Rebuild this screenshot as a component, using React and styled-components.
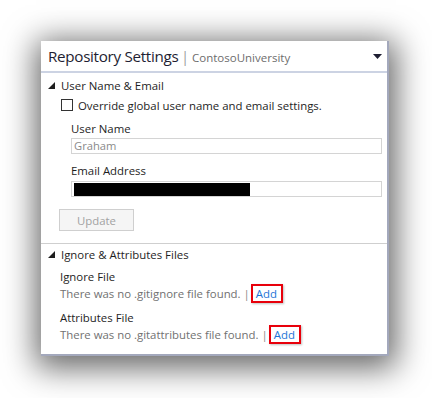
import styled, { createGlobalStyle } from 'styled-components'

const GlobalStyle = createGlobalStyle`
  html, body {
    margin: 0;
    padding: 0;
    background: #ffffff;
  }
  body {
    font-family: "Open Sans", "Noto Sans", sans-serif;
  }
`;

const Page = styled.div`
  width: 432px;
  height: 398px;
  padding: 41px 0 0 41px;
  box-sizing: border-box;
  overflow: hidden;
`;

const Panel = styled.div`
  width: 348px;
  height: 315px;
  box-sizing: border-box;
  background: #ffffff;
  border-right: 2px solid #a3a8bc;
  border-bottom: 2px solid #a3a8bc;
  box-shadow: 1px 6px 30px 6px rgba(0, 0, 0, 0.6);
  display: flex;
  flex-direction: column;
`;

const Header = styled.div`
  height: 30px;
  display: flex;
  align-items: center;
  padding: 0 5px 0 7px;
  border-bottom: 2px solid #ccd3e3;
`;

const Title = styled.span`
  font-size: 15.2px;
  color: #1e1e32;
  letter-spacing: -0.3px;
`;

const Bar = styled.span`
  color: #9a9a9a;
  font-size: 14px;
  margin: 0 3px 0 3px;
`;

const Subtitle = styled.span`
  font-size: 11.5px;
  color: #6d6d6d;
  margin-top: 2px;
  flex: 1;
`;

const Section = styled.div`
  padding: ${p => p.$pad || '4px 0 0 7px'};
  border-bottom: ${p => (p.$divided ? '1px solid #cfcfcf' : 'none')};
`;

const SectionHead = styled.div`
  display: flex;
  align-items: center;
  gap: 6px;
  font-size: 11.4px;
  color: #1e1e1e;
  height: 16px;
`;

const Body = styled.div`
  padding-left: ${p => p.$indent || 12}px;
`;

const CheckRow = styled.label`
  display: flex;
  align-items: center;
  gap: 5px;
  font-size: 11.4px;
  color: #1e1e1e;
  margin-top: 4px;
  margin-left: 2px;
  height: 16px;
`;

const Box = styled.span`
  width: 10px;
  height: 10px;
  border: 1px solid #333;
  background: #fff;
`;

const Field = styled.div`
  padding-left: 12px;
  margin-top: ${p => p.$top || 9}px;
`;

const Label = styled.div`
  font-size: 11.4px;
  color: #1e1e1e;
  line-height: 15px;
`;

const Input = styled.div`
  margin-top: ${p => p.$top || 5}px;
  width: 311px;
  height: 16px;
  box-sizing: border-box;
  border: 1px solid #d4d4d4;
  font-size: 11.2px;
  color: #8a8a8a;
  padding: 0 2px;
  line-height: 14px;
  display: flex;
  align-items: center;
`;

const Redact = styled.span`
  width: 176px;
  height: 13px;
  background: #000;
`;

const Button = styled.div`
  margin: 12px 0 12px 0;
  width: 75px;
  height: 22px;
  box-sizing: border-box;
  border: 1px solid #cfcfcf;
  background: #f5f5f5;
  color: #a2a2a2;
  font-size: 11.4px;
  display: flex;
  align-items: center;
  justify-content: center;
`;

const Group = styled.div`
  margin-top: ${p => p.$top || 6}px;
`;

const Note = styled.div`
  font-size: 11.4px;
  color: #717171;
  display: flex;
  align-items: center;
  line-height: 17px;
`;

const Sep = styled.span`
  margin: 0 1px 0 3px;
  color: #888;
`;

const AddLink = styled.span`
  color: #1e74d6;
  border: 2px solid #e8000b;
  padding: 0 4px 0 3px;
  line-height: 15px;
  box-shadow: 1px 1px 2px rgba(0, 0, 0, 0.25);
`;

const Expander = () => (
  <svg width="7" height="7" viewBox="0 0 7 7">
    <polygon points="7,0 7,7 0,7" fill="#1e1e1e" />
  </svg>
);

const Caret = () => (
  <svg width="9" height="5" viewBox="0 0 9 5">
    <polygon points="0,0 9,0 4.5,5" fill="#1e1e32" />
  </svg>
);

export default function App() {
  return (
    <Page>
      <GlobalStyle />
      <Panel>
        <Header>
          <Title>Repository Settings</Title>
          <Bar>|</Bar>
          <Subtitle>ContosoUniversity</Subtitle>
          <Caret />
        </Header>

        <Section $divided>
          <SectionHead>
            <Expander />
            User Name &amp; Email
          </SectionHead>
          <Body $indent={11}>
            <CheckRow>
              <Box />
              Override global user name and email settings.
            </CheckRow>
            <Field $top={8}>
              <Label>User Name</Label>
              <Input $top={2}>Graham</Input>
            </Field>
            <Field $top={9}>
              <Label>Email Address</Label>
              <Input $top={3}>
                <Redact />
              </Input>
            </Field>
            <Button>Update</Button>
          </Body>
        </Section>

        <Section $pad="2px 0 0 7px">
          <SectionHead>
            <Expander />
            Ignore &amp; Attributes Files
          </SectionHead>
          <Body $indent={12}>
            <Group $top={7}>
              <Label>Ignore File</Label>
              <Note>
                There was no .gitignore file found.<Sep>|</Sep>
                <AddLink>Add</AddLink>
              </Note>
            </Group>
            <Group $top={7}>
              <Label>Attributes File</Label>
              <Note>
                There was no .gitattributes file found.<Sep>|</Sep>
                <AddLink>Add</AddLink>
              </Note>
            </Group>
          </Body>
        </Section>
      </Panel>
    </Page>
  )
}
